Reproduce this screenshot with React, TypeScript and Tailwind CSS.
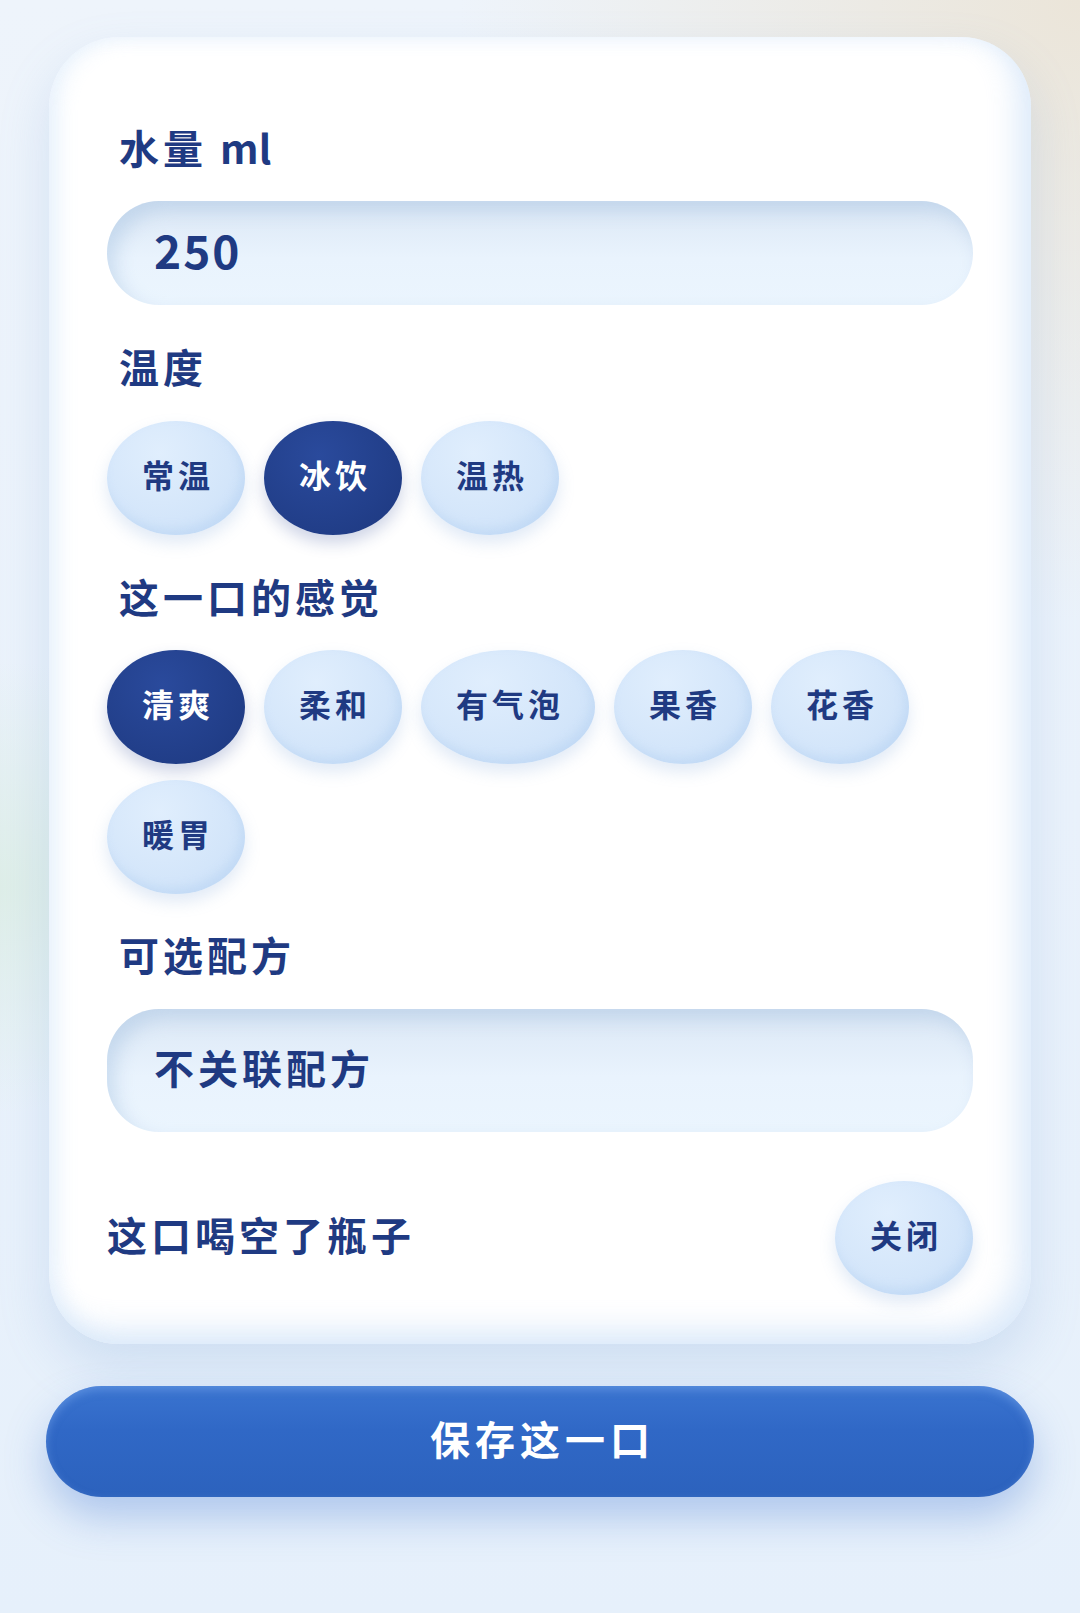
import React, { useState } from "react";

const TEMPS = ["常温", "冰饮", "温热"];
const FEELINGS = ["清爽", "柔和", "有气泡", "果香", "花香", "暖胃"];

const FONT = "font-['Noto_Sans_CJK_SC','Noto_Sans',sans-serif]";

interface ChipProps {
  label: string;
  active?: boolean;
  wide?: boolean;
  onClick?: () => void;
}

const Chip: React.FC<ChipProps> = ({ label, active, wide, onClick }) => {
  return (
    <button
      type="button"
      onClick={onClick}
      className={`${wide ? "w-[174px]" : "w-[138px]"} h-[114px] shrink-0 rounded-[50%] flex items-center justify-center text-[32px] font-bold tracking-[4px] pl-[4px] pb-[8px] ${
        active
          ? "bg-[radial-gradient(ellipse_at_40%_30%,#2a4a9c,#1d387f)] text-white shadow-[0_8px_16px_rgba(30,60,140,0.22)]"
          : "bg-[radial-gradient(ellipse_at_38%_28%,#e0eefd,#cbe0f8)] text-[#1f3a82] shadow-[0_8px_16px_rgba(120,160,215,0.22),inset_-4px_-6px_10px_rgba(175,205,240,0.4)]"
      }`}
    >
      {label}
    </button>
  );
};

const Label: React.FC<{ children: React.ReactNode; className?: string }> = ({
  children,
  className,
}) => (
  <div
    className={`pl-[12px] text-[40px] leading-[46px] font-bold tracking-[4px] text-[#1f3a82] ${className ?? ""}`}
  >
    {children}
  </div>
);

export default function App() {
  const [temp, setTemp] = useState("冰饮");
  const [feeling, setFeeling] = useState("清爽");
  const [empty, setEmpty] = useState(false);

  return (
    <div
      className={`${FONT} min-h-[1613px] w-full px-[46px] pt-[37px] pb-[100px] bg-[radial-gradient(circle_at_100%_0%,#ebe5d9_0%,rgba(235,229,217,0)_32%),radial-gradient(ellipse_at_0%_55%,#deeee8_0%,rgba(222,238,232,0)_18%),linear-gradient(180deg,#eef4fb_0%,#e6f0fb_100%)]`}
    >
      <div className="mx-[3px] rounded-[70px] bg-white px-[58px] pt-[87px] pb-[49px] shadow-[inset_-14px_-14px_30px_rgba(205,225,248,0.65),inset_10px_0_20px_rgba(225,238,252,0.6),0_24px_50px_rgba(120,160,215,0.22)]">
        <Label>
          水量 <span className="tracking-normal">ml</span>
        </Label>
        <div className="mt-[31px] h-[104px] rounded-[52px] bg-[linear-gradient(180deg,#dbe7f5_0%,#e9f3fd_55%,#ebf5fe_100%)] shadow-[inset_8px_10px_18px_rgba(165,192,225,0.45)] flex items-center pl-[47px] pb-[8px] text-[46px] font-bold tracking-[2px] text-[#1f3a82]">
          250
        </div>

        <Label className="mt-[38px]">温度</Label>
        <div className="mt-[32px] flex gap-x-[19px]">
          {TEMPS.map((t) => (
            <Chip key={t} label={t} active={temp === t} onClick={() => setTemp(t)} />
          ))}
        </div>

        <Label className="mt-[38px]">这一口的感觉</Label>
        <div className="mt-[31px] flex flex-wrap gap-x-[19px] gap-y-[16px]">
          {FEELINGS.map((f) => (
            <Chip
              key={f}
              label={f}
              wide={f === "有气泡"}
              active={feeling === f}
              onClick={() => setFeeling(f)}
            />
          ))}
        </div>

        <Label className="mt-[37px]">可选配方</Label>
        <div className="mt-[32px] h-[123px] rounded-[52px] bg-[linear-gradient(180deg,#dbe7f5_0%,#e9f3fd_55%,#ebf5fe_100%)] shadow-[inset_8px_10px_18px_rgba(165,192,225,0.45)] flex items-center pl-[47px] pb-[8px] text-[40px] font-bold tracking-[4px] text-[#1f3a82]">
          不关联配方
        </div>

        <div className="mt-[49px] flex items-center justify-between">
          <div className="pb-[8px] text-[40px] leading-[46px] font-bold tracking-[4px] text-[#1f3a82]">
            这口喝空了瓶子
          </div>
          <Chip label={empty ? "开启" : "关闭"} active={empty} onClick={() => setEmpty(!empty)} />
        </div>
      </div>

      <button
        type="button"
        className="mt-[42px] w-full h-[111px] rounded-[56px] pb-[8px] bg-[linear-gradient(180deg,#3a74d0_0%,#3068c6_40%,#2c62bd_100%)] text-white text-[40px] font-bold tracking-[5px] pl-[5px] shadow-[0_20px_40px_rgba(70,120,210,0.35),inset_0_4px_8px_rgba(120,165,235,0.5)]"
      >
        保存这一口
      </button>
    </div>
  );
}
